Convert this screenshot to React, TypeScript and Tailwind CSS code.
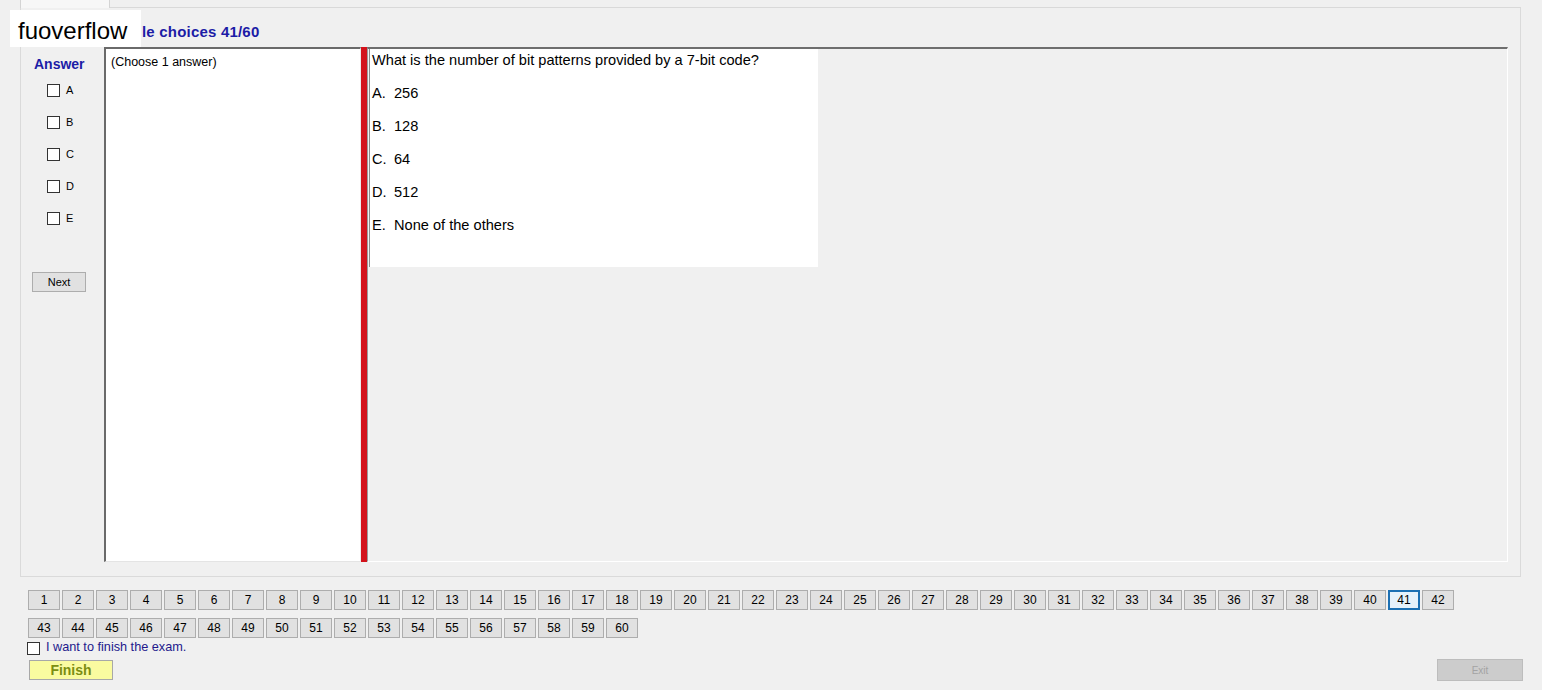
import React from "react";

const options = [
  { key: "A", text: "256" },
  { key: "B", text: "128" },
  { key: "C", text: "64" },
  { key: "D", text: "512" },
  { key: "E", text: "None of the others" },
];

const row1 = Array.from({ length: 42 }, (_, i) => i + 1);
const row2 = Array.from({ length: 18 }, (_, i) => i + 43);

function NumButton({ n }: { n: number }) {
  const current = n === 41;
  return (
    <button
      className={
        current
          ? "w-[32px] h-[20px] bg-[#e5f1fb] border-2 border-[#1b6fb3] text-[12px] text-black flex items-center justify-center"
          : "w-[32px] h-[20px] bg-[#e1e1e1] border border-[#adadad] text-[12px] text-black flex items-center justify-center"
      }
    >
      {n}
    </button>
  );
}

function Box() {
  return <span className="w-[13px] h-[13px] border border-[#333333] bg-white shrink-0" />;
}

export default function App() {
  return (
    <div className="relative w-[1542px] h-[690px] bg-[#f0f0f0] overflow-hidden font-['Liberation_Sans',Arial,sans-serif] text-black">
      {/* tab strip */}
      <div className="ml-[20px] w-[1501px] h-[8px] flex">
        <div className="w-[90px] h-full bg-[#f7f7f7] border-l border-r border-[#d4d4d4]" />
        <div className="flex-1 border-b border-[#d9d9d9]" />
      </div>

      {/* tab panel */}
      <div className="ml-[20px] w-[1501px] h-[569px] border-l border-r border-b border-[#dadada] flex flex-col">
        <div className="h-[39px] pl-[121px] pt-[16px] text-[15px] leading-[16px] tracking-[0.2px] font-bold text-[#1c1ca6]">
          le choices 41/60
        </div>

        <div className="flex h-[515px]">
          {/* answer column */}
          <div className="w-[83px] pt-[9px] flex flex-col">
            <div className="h-[16px] leading-[16px] pl-[13px] text-[14px] font-bold text-[#1c1ca6]">Answer</div>
            <div className="mt-[8px] flex flex-col gap-[12px]">
              {options.map((o) => (
                <div key={o.key} className="h-[20px] pl-[26px] flex items-center gap-[6px] text-[11px]">
                  <Box />
                  <span>{o.key}</span>
                </div>
              ))}
            </div>
            <button className="mt-[44px] ml-[11px] w-[54px] h-[20px] bg-[#e1e1e1] border border-[#adadad] text-[11px] flex items-center justify-center">
              Next
            </button>
          </div>

          {/* left text box */}
          <div className="w-[257px] h-full bg-white border-l-2 border-t-2 border-[#6a6a6a] border-r border-r-[#ececec] border-b border-b-[#e4e4e4] pl-[5px] pt-[6px] text-[12.5px] leading-[14px]">
            (Choose 1 answer)
          </div>

          {/* splitter */}
          <div className="w-[6px] h-full bg-[#d3121b]" />

          {/* right area */}
          <div className="w-[1141px] h-full border-t-2 border-t-[#6e6e6e] border-l border-l-[#9a9a9a] border-r border-r-white border-b border-b-white">
            <div className="ml-[1px] w-[449px] h-[218px] bg-white border-l border-[#8a8a8a] pl-[2px] text-[14.6px] leading-[22px]">
              <div className="h-[22px]">What is the number of bit patterns provided by a 7-bit code?</div>
              {options.map((o) => (
                <div key={o.key} className="mt-[11px] h-[22px] flex">
                  <span className="w-[22px]">{o.key}.</span>
                  <span>{o.text}</span>
                </div>
              ))}
            </div>
          </div>
        </div>
      </div>

      {/* question navigator */}
      <div className="pl-[28px] mt-[13px] flex flex-col gap-[8px]">
        <div className="flex gap-[2px]">
          {row1.map((n) => (
            <NumButton key={n} n={n} />
          ))}
        </div>
        <div className="flex gap-[2px]">
          {row2.map((n) => (
            <NumButton key={n} n={n} />
          ))}
        </div>
      </div>

      <div className="pl-[27px] mt-[2px] h-[16px] flex items-center gap-[6px] text-[12.7px] text-[#23198c]">
        <Box />
        <span>I want to finish the exam.</span>
      </div>

      <div className="mt-[4px] pl-[29px] pr-[19px] flex justify-between items-start">
        <button className="w-[84px] h-[20px] bg-[#fafba0] border border-[#a8a8a8] text-[14px] font-bold text-[#7c8e12] flex items-center justify-center">
          Finish
        </button>
        <button className="-mt-[1px] w-[86px] h-[22px] bg-[#cccccc] border border-[#bdbdbd] text-[10px] text-[#a3a3a3] flex items-center justify-center">
          Exit
        </button>
      </div>

      {/* watermark */}
      <div className="absolute left-[10px] top-[10px] w-[131px] h-[37px] bg-white pl-[8px] pt-[5px] flex items-center text-[24px] text-black">
        fuoverflow
      </div>
    </div>
  );
}
